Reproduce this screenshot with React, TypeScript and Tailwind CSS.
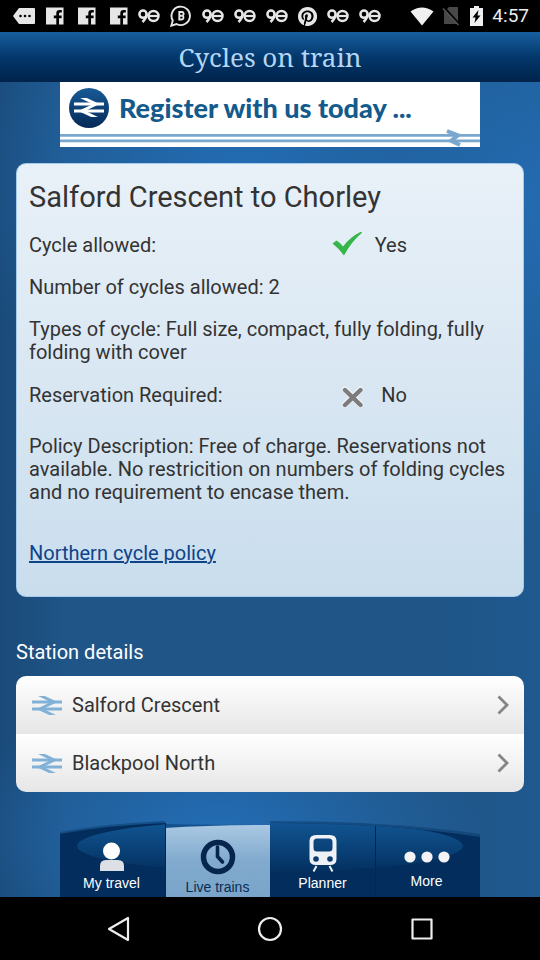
import React from "react";

function RailMark({ className, stroke = "#82b1d8" }: { className: string; stroke?: string }) {
  return (
    <svg viewBox="0 0 62 39" className={className} fill="none" stroke={stroke} aria-hidden="true">
      <path d="M1-8.9 46 12.4 16 26.6 61 47.9" strokeWidth="6" />
      <path d="M0 12.4H62M62 26.6H0" strokeWidth="6.4" />
    </svg>
  );
}

function MessageIcon() {
  return (
    <svg viewBox="0 0 24 18" className="h-[18px] w-6" aria-hidden="true">
      <path d="M7 1h15q1 0 1 1v14q0 1-1 1H7L1 9z" fill="#e6e6e6" />
      <g fill="#000">
        <circle cx="8.500" cy="9" r="1.300" />
        <circle cx="13" cy="9" r="1.300" />
        <circle cx="17.500" cy="9" r="1.300" />
      </g>
    </svg>
  );
}

function FacebookIcon() {
  return (
    <svg viewBox="0 0 18 18" className="size-[18px]" aria-hidden="true">
      <path d="M0 .5h17.500v17H13v-6.300h2.600V8.500H13V6.800q0-1.300 1.300-1.300h1.500V3h-2.300Q10.300 3 10.300 6.200v2.300H7.800v2.700h2.500v6.300H0z" fill="#e6e6e6" />
    </svg>
  );
}

function NinetyIcon() {
  return (
    <svg viewBox="0 0 22 14" className="h-[14px] w-[22px]" fill="none" stroke="#e6e6e6" strokeWidth="2.500" aria-hidden="true">
      <circle cx="5" cy="5.200" r="3.600" />
      <path d="M8.600 5.500Q8.500 9 4.500 13" />
      <circle cx="15.500" cy="7" r="5" />
      <path d="M11 7h9" strokeWidth="2.200" />
    </svg>
  );
}

function BubbleIcon() {
  return (
    <svg viewBox="0 0 22 22" className="size-[22px]" aria-hidden="true">
      <path d="M1.300 20.700 2.800 15.500A9.200 9.200 0 1 1 6.500 19z" fill="none" stroke="#e6e6e6" strokeWidth="1.900" />
      <path d="M9.300 7h2.200a1.800 1.800 0 0 1 .6 3.600 2 2 0 0 1-.5 3.900H9.300zM9.300 10.700h2.500" fill="none" stroke="#e6e6e6" strokeWidth="1.900" />
    </svg>
  );
}

function PinIcon() {
  return (
    <svg viewBox="0 0 24 24" className="size-[19px]" fill="#e6e6e6" aria-hidden="true">
      <path d="M12 0C5.370 0 0 5.370 0 12c0 5.080 3.160 9.430 7.630 11.170-.11-.95-.2-2.410.04-3.450.22-.93 1.410-5.960 1.410-5.960s-.36-.72-.36-1.780c0-1.670.97-2.920 2.170-2.920 1.030 0 1.520.77 1.520 1.690 0 1.030-.65 2.570-.99 3.990-.28 1.190.6 2.170 1.770 2.170 2.130 0 3.770-2.250 3.770-5.490 0-2.870-2.060-4.870-5.010-4.870-3.410 0-5.410 2.560-5.410 5.200 0 1.030.4 2.130.89 2.730.1.120.11.220.08.350-.09.370-.29 1.190-.33 1.350-.05.220-.17.270-.4.160-1.500-.7-2.430-2.890-2.430-4.650 0-3.780 2.750-7.250 7.920-7.250 4.160 0 7.390 2.960 7.390 6.920 0 4.130-2.600 7.460-6.220 7.460-1.210 0-2.360-.63-2.750-1.380l-.75 2.850c-.27 1.040-1 2.350-1.490 3.150A12 12 0 1 0 12 0z" />
    </svg>
  );
}

function StatusBar() {
  return (
    <div className="flex h-8 items-center justify-between bg-black pr-[11px] pl-3">
      <div className="flex items-center">
        <MessageIcon />
        <div className="ml-[10px] flex gap-[14px]">
          <FacebookIcon />
          <FacebookIcon />
          <FacebookIcon />
        </div>
        <div className="ml-[10px] flex items-center gap-[10px]">
          <NinetyIcon />
          <BubbleIcon />
          <NinetyIcon />
          <NinetyIcon />
          <NinetyIcon />
          <PinIcon />
          <NinetyIcon />
          <NinetyIcon />
        </div>
      </div>
      <div className="flex items-center">
        <svg viewBox="0 0 24 19" className="h-[19px] w-6" aria-hidden="true">
          <path d="M.5 4.500Q12-3.500 23.500 4.500L12 18.500z" fill="#f0f0f0" />
        </svg>
        <svg viewBox="0 0 18 20" className="ml-2 h-5 w-[18px]" aria-hidden="true">
          <path d="M7 1h9v17H2V6z" fill="#484848" />
          <path d="M1 .5 17 18" stroke="#000" strokeWidth="2.500" />
          <path d="M1 2.500 16.500 19" stroke="#555" strokeWidth="1.500" />
        </svg>
        <svg viewBox="0 0 13 20" className="ml-[10px] h-5 w-[13px]" aria-hidden="true">
          <path d="M4 0h5v2h4v18H0V2h4z" fill="#f0f0f0" />
          <path d="M8.500 4 2.500 11.500h3L4.500 17l6-7.500h-3z" fill="#000" />
        </svg>
        <span className="ml-[9px] text-[19px] leading-6 text-[#ececec]">4:57</span>
      </div>
    </div>
  );
}

function Banner() {
  return (
    <a href="#register" className="mx-auto block w-7/9 bg-white">
      <span className="flex h-[51px] items-center gap-[10px] pl-[9px]">
        <svg viewBox="0 0 40 40" className="size-10" aria-hidden="true">
          <defs>
            <linearGradient id="disc" x1="0" y1="0" x2="0" y2="1">
              <stop offset="0" stopColor="#195a96" />
              <stop offset="1" stopColor="#052a58" />
            </linearGradient>
          </defs>
          <circle cx="20" cy="20" r="20" fill="url(#disc)" />
          <svg x="5" y="10" width="30" height="19" viewBox="0 0 62 39" fill="none" stroke="#fff">
            <path d="M1-8.900 46 12.400 16 26.600 61 47.900" strokeWidth="6" />
            <path d="M0 12.400H62M62 26.600H0" strokeWidth="6.400" />
          </svg>
        </svg>
        <span className="font-['Lato',sans-serif] text-[27px] leading-8 font-black whitespace-nowrap text-[#145a8c]">
          Register with us today ...
        </span>
      </span>
      <svg viewBox="0 0 420 14" className="block h-[14px] w-full overflow-visible" fill="none" stroke="#79a7cd" aria-hidden="true">
        <path d="M0 2.400H420M0 7.800H420" strokeWidth="2.800" />
        <path d="M387-2 398 2.400 391 7.800 400 12" strokeWidth="4" />
      </svg>
    </a>
  );
}

function CheckIcon() {
  return (
    <svg viewBox="0 0 30 28" className="h-7 w-[30px]" aria-hidden="true">
      <path d="M.5 11.500 4.500 8.500Q8 10.500 11 14.500 18 5 29-.3L30 .8Q20 9 12 23.500 7 16.500 .5 11.500z" fill="#35b54a" />
    </svg>
  );
}

function CrossIcon() {
  return (
    <svg viewBox="0 0 30 24" className="h-6 w-[30px]" aria-hidden="true">
      <path d="M7 5.500 22.500 20.500M22.500 5.500 7 20.500" stroke="#fff" strokeOpacity=".6" strokeWidth="6" strokeLinecap="round" />
      <path d="M7 6 22.500 21M22.500 6 7 21" stroke="#7d7b7c" strokeWidth="4.400" strokeLinecap="round" />
    </svg>
  );
}

function Fact({ label, value, icon }: { label: string; value: string; icon: React.ReactNode }) {
  return (
    <div className="flex h-[23px] items-center justify-between pr-26">
      <dt>{label}</dt>
      <dd className="flex items-center gap-[13px]">
        {icon}
        {value}
      </dd>
    </div>
  );
}

function StationRow({ name }: { name: string }) {
  return (
    <li>
      <a href="#station" className="flex h-[58px] items-center bg-linear-to-b from-white to-[#e6e6e6] pr-[15px] pl-4 text-[#333]">
        <RailMark className="h-[19px] w-[30px]" />
        <span className="ml-[10px] flex-1">{name}</span>
        <svg viewBox="0 0 12 20" className="h-5 w-3" fill="none" stroke="#858585" strokeWidth="2.800" aria-hidden="true">
          <path d="M1.500 1.500 10 10 1.500 18.500" />
        </svg>
      </a>
    </li>
  );
}

function TabBar() {
  const tab = "relative flex flex-col items-center justify-end";
  return (
    <nav className="relative mx-auto mt-auto grid h-[77px] w-7/9 grid-cols-4 font-['Liberation_Sans',Arial,sans-serif] text-sm leading-[18px] text-white">
      <svg viewBox="0 0 420 77" preserveAspectRatio="none" className="absolute inset-0 size-full" aria-hidden="true">
        <defs>
          <linearGradient id="barShine" x1="0" y1="0" x2="0" y2="1">
            <stop offset="0" stopColor="#125795" />
            <stop offset="1" stopColor="#03305f" />
          </linearGradient>
          <linearGradient id="barActive" x1="0" y1="0" x2="0" y2="1">
            <stop offset="0" stopColor="#a9c8e2" />
            <stop offset=".5" stopColor="#81aace" />
            <stop offset="1" stopColor="#7aa4c9" />
          </linearGradient>
          <clipPath id="barClip">
            <path d="M0 14Q50 5 105 3V77H0zM210 3Q330 3 420 17V77H210z" />
          </clipPath>
        </defs>
        <path d="M0 12Q50 3 105 1V4Q160 5 210 5V1Q330 1 420 14V20H0z" fill="#073767" fillOpacity=".5" />
        <path d="M0 14Q50 5 105 3V77H0zM210 3Q330 3 420 17V77H210z" fill="#032d5c" />
        <g clipPath="url(#barClip)">
          <ellipse cx="210" cy="26" rx="193" ry="26" fill="url(#barShine)" />
        </g>
        <path d="M105 8Q150 5 210 5V77H105z" fill="url(#barActive)" />
        <path d="M105.500 3V77M315.500 6V77" stroke="#022750" strokeWidth="1" />
      </svg>
      <a href="#travel" className={`${tab} pr-[2px] pb-[5px]`}>
        <svg viewBox="0 0 26 30" className="mb-[2px] h-[30px] w-[26px]" aria-hidden="true">
          <circle cx="12.500" cy="9" r="8.500" fill="#fff" />
          <path d="M1 29V24Q1 18 7 18H19Q25 18 25 24V29z" fill="#dcdfe4" />
        </svg>
        My travel
      </a>
      <a href="#live" aria-current="page" className={`${tab} pb-px text-[#0b2c52]`}>
        <svg viewBox="0 0 36 36" className="mb-[3px] size-9" fill="none" stroke="#06264d" aria-hidden="true">
          <circle cx="18" cy="18" r="14.500" strokeWidth="5.500" />
          <path d="M17.500 8V17.500L22.500 23" strokeWidth="3.600" strokeLinecap="round" />
        </svg>
        Live trains
      </a>
      <a href="#planner" className={`${tab} pb-[5px]`}>
        <svg viewBox="0 0 28 38" className="mb-[2px] h-[38px] w-7" aria-hidden="true">
          <path
            d="M7 1H21Q27.500 1 27.500 7V25Q27.500 31 21 31H7Q.5 31 .5 25V7Q.5 1 7 1zM8 4.500Q4.500 4.500 4.500 8V14Q4.500 17.500 8 17.500H20Q23.500 17.500 23.500 14V8Q23.500 4.500 20 4.500z"
            fill="#eef1f5"
            fillRule="evenodd"
          />
          <circle cx="7" cy="25" r="2.800" fill="#0b3b70" />
          <circle cx="21" cy="25" r="2.800" fill="#0b3b70" />
          <path d="M7.500 32 4.500 37.500M20.500 32 23.500 37.500" stroke="#eef1f5" strokeWidth="2" />
        </svg>
        Planner
      </a>
      <a href="#more" className={`${tab} pr-[2px] pb-[7px]`}>
        <svg viewBox="0 0 46 12" className="mb-[9px] h-3 w-[46px]" fill="#f4f4f6" aria-hidden="true">
          <circle cx="6" cy="6" r="5.600" />
          <circle cx="23" cy="6" r="5.600" />
          <circle cx="40" cy="6" r="5.600" />
        </svg>
        More
      </a>
    </nav>
  );
}

function SystemNav() {
  return (
    <div className="flex h-[63px] items-center justify-center gap-31 bg-black">
      <button type="button" aria-label="Back">
        <svg viewBox="0 0 28 28" className="size-7" fill="none" stroke="#eee" strokeWidth="2.200" strokeLinejoin="round">
          <path d="M24 3V25L5 14z" />
        </svg>
      </button>
      <button type="button" aria-label="Home">
        <svg viewBox="0 0 28 28" className="size-7" fill="none" stroke="#eee" strokeWidth="2.200">
          <circle cx="14" cy="14" r="11" />
        </svg>
      </button>
      <button type="button" aria-label="Recent apps">
        <svg viewBox="0 0 28 28" className="size-7" fill="none" stroke="#eee" strokeWidth="2.200" strokeLinejoin="round">
          <path d="M4.500 4.500H23.500V23.500H4.500z" />
        </svg>
      </button>
    </div>
  );
}

export default function App() {
  return (
    <div className="flex min-h-screen flex-col font-['Roboto',sans-serif] text-xl leading-[23px] text-[#333]">
      <StatusBar />
      <header className="flex h-[50px] items-center justify-center bg-linear-to-b from-[#185f9f] via-[#04386c] to-[#00234b]">
        <h1 className="font-['Noto_Serif','Liberation_Serif',serif] text-[26px] leading-9 text-[#b3d6f5]">Cycles on train</h1>
      </header>
      <main className="flex flex-1 flex-col bg-[radial-gradient(ellipse_55%_30%_at_45%_12%,#236db5,transparent),radial-gradient(ellipse_50%_18%_at_40%_92%,#236db5,transparent),radial-gradient(ellipse_40%_40%_at_100%_15%,#236bb0,transparent),linear-gradient(to_right,#1a4a78,#1f5587_12%,#1f5587_80%,#1f598f)]">
        <Banner />
        <section className="mx-4 mt-4 rounded-[10px] border border-[#a5cbec] bg-linear-to-b from-[#e9f1f8] to-[#c9dded] px-3 pt-4 pb-[31px]">
          <h2 className="mb-5 text-[29px] leading-[34px]">Salford Crescent to Chorley</h2>
          <dl>
            <Fact label="Cycle allowed:" value="Yes" icon={<CheckIcon />} />
          </dl>
          <p className="my-[19px]">Number of cycles allowed: 2</p>
          <p className="mb-5">Types of cycle: Full size, compact, fully folding, fully folding with cover</p>
          <dl>
            <Fact label="Reservation Required:" value="No" icon={<CrossIcon />} />
          </dl>
          <p className="mt-7 mb-[38px]">
            Policy Description: Free of charge. Reservations not available. No restricition on numbers of folding cycles and no
            requirement to encase them.
          </p>
          <a href="#policy" className="inline-block text-[#0f438a] underline">
            Northern cycle policy
          </a>
        </section>
        <section className="mx-4 mt-11">
          <h2 className="mb-3 text-white">Station details</h2>
          <ul className="overflow-hidden rounded-[10px]">
            <StationRow name="Salford Crescent" />
            <StationRow name="Blackpool North" />
          </ul>
        </section>
        <TabBar />
      </main>
      <SystemNav />
    </div>
  );
}
